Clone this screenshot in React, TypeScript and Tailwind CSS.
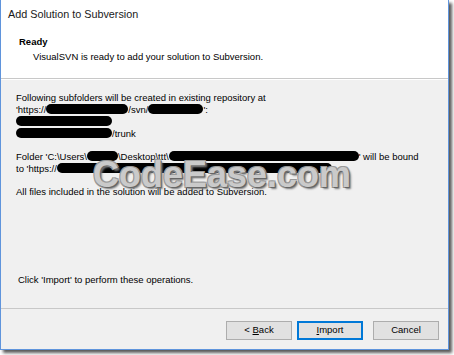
const font = { fontFamily: '"Liberation Sans", Arial, sans-serif' };

function Blot({ w }: { w: number }) {
  return <span className="inline-block h-[10px] rounded-full bg-black align-[-1px]" style={{ width: w }} />;
}

function Btn({ label, ul, rest, primary }: { label?: string; ul?: string; rest?: string; primary?: boolean }) {
  return (
    <button
      className={`w-[66px] h-[19px] text-[9.5px] text-black bg-[#e1e1e1] border ${
        primary ? "border-[#0078d7] shadow-[inset_0_0_0_1px_#0078d7]" : "border-[#adadad]"
      }`}
    >
      {label}
      {ul && <span className="underline">{ul}</span>}
      {rest}
    </button>
  );
}

export default function App() {
  return (
    <div className="w-[454px] h-[355px] bg-white relative overflow-hidden" style={font}>
      <div className="w-[449px] h-[350px] flex flex-col border-l border-r border-b border-[#5f94dc] shadow-[3px_3px_3px_rgba(0,0,0,0.65)]">
        {/* header */}
        <div className="h-[79px] bg-white flex flex-col pl-[7px] pt-[6px] border-b border-[#c8c8c8]">
          <div className="text-[10.8px] text-[#1a1a1a]">Add Solution to Subversion</div>
          <div className="mt-[14px] pl-[11px] text-[9.5px] font-bold text-black leading-[12px]">Ready</div>
          <div className="mt-[3px] pl-[25px] text-[9.5px] text-black leading-[12px]">
            VisualSVN is ready to add your solution to Subversion.
          </div>
        </div>
        {/* body */}
        <div className="flex-1 bg-[#f0f0f0] border-t border-white flex flex-col text-[9.5px] leading-[12px] text-black pl-[15px] pt-[12px]">
          <div>Following subfolders will be created in existing repository at</div>
          <div>
            'https://<Blot w={82} />/svn/<Blot w={55} />':
          </div>
          <div>
            <Blot w={96} />
          </div>
          <div>
            <Blot w={96} />/trunk
          </div>
          <div className="mt-[11px]">
            Folder 'C:\Users\<Blot w={31} />\Desktop\ttt\<Blot w={190} />' will be bound
          </div>
          <div>
            to 'https://<Blot w={275} />'
          </div>
          <div className="mt-[11px]">All files included in the solution will be added to Subversion.</div>
          <div className="mt-auto mb-[22px] pl-[2px]">Click 'Import' to perform these operations.</div>
        </div>
        {/* footer */}
        <div className="h-[41px] bg-[#f0f0f0] border-t border-[#c8c8c8] flex items-start justify-end pr-[9px] pt-[12px]">
          <Btn label="< " ul="B" rest="ack" />
          <div className="w-[5px]" />
          <Btn ul="I" rest="mport" primary />
          <div className="w-[10px]" />
          <Btn label="Cancel" />
        </div>
      </div>
      <div
        className="absolute left-[93px] top-[157px] text-[36px] font-bold text-[#cacaca] leading-none pointer-events-none"
        style={{ fontFamily: '"Liberation Sans", Arial, sans-serif', textShadow: "1px 1px 0 #666, -1px -1px 0 #999, 1px -1px 0 #999, -1px 1px 0 #999, 2px 2px 2px #777" }}
      >
        CodeEase.com
      </div>
    </div>
  );
}
